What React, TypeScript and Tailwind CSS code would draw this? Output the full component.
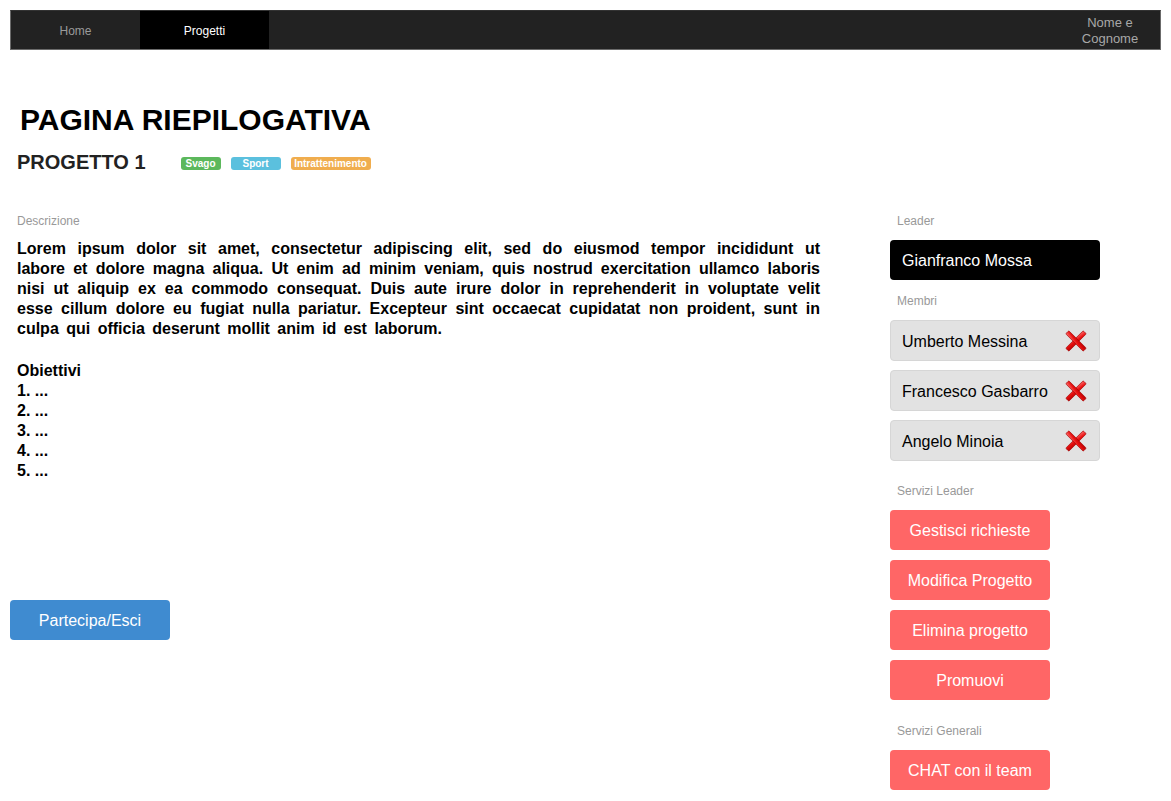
import React from "react";

function RedX() {
  return (
    <svg width="22" height="22" viewBox="0 0 24 24" className="shrink-0">
      <defs>
        <linearGradient id="xg" x1="0" y1="0" x2="1" y2="1">
          <stop offset="0%" stopColor="#ff6a6a" />
          <stop offset="50%" stopColor="#e81010" />
          <stop offset="100%" stopColor="#b80000" />
        </linearGradient>
      </defs>
      <g stroke="#a00000" strokeWidth="0.7" fill="url(#xg)">
        <rect x="9.6" y="-1.5" width="4.8" height="27" rx="1.2" transform="rotate(45 12 12)" />
        <rect x="9.6" y="-1.5" width="4.8" height="27" rx="1.2" transform="rotate(-45 12 12)" />
      </g>
    </svg>
  );
}

const members = ["Umberto Messina", "Francesco Gasbarro", "Angelo Minoia"];
const leaderServices = ["Gestisci richieste", "Modifica Progetto", "Elimina progetto", "Promuovi"];

export default function App() {
  return (
    <div className="w-[1171px] h-[801px] bg-white px-[10px] pt-[10px] font-['Liberation_Sans',Arial,sans-serif] overflow-hidden">
      <nav className="h-[40px] flex bg-[#222222] border border-[#6b6b6b] border-t-[#333]">
        <div className="w-[129px] h-full pt-[2px] flex items-center justify-center text-[12px] text-[#9a9a9a]">Home</div>
        <div className="w-[129px] h-full pt-[2px] flex items-center justify-center text-[12px] text-white bg-black">Progetti</div>
        <div className="flex-1" />
        <div className="w-[100px] h-full pt-[2px] flex flex-col items-center justify-center text-[13px] leading-[16px] text-[#a8a8a8] text-center">
          <span>Nome e</span>
          <span>Cognome</span>
        </div>
      </nav>

      <h1 className="mt-[53px] pl-[10px] text-[30px] leading-[34px] font-bold text-black">PAGINA RIEPILOGATIVA</h1>

      <div className="mt-[13px] pl-[7px] flex items-start">
        <h2 className="text-[20px] leading-[24px] font-bold text-[#222]">PROGETTO 1</h2>
        <div className="ml-[35px] mt-[7px] flex gap-[10px]">
          <span className="w-[40px] h-[13px] leading-[13px] rounded-[3px] bg-[#5cb85c] text-white text-[10px] font-bold text-center">Svago</span>
          <span className="w-[50px] h-[13px] leading-[13px] rounded-[3px] bg-[#5bc0de] text-white text-[10px] font-bold text-center">Sport</span>
          <span className="w-[80px] h-[13px] leading-[13px] rounded-[3px] bg-[#f0ad4e] text-white text-[10px] font-bold text-center whitespace-nowrap">Intrattenimento</span>
        </div>
      </div>

      <div className="mt-[26px] flex">
        <div className="w-[810px] flex flex-col">
          <div className="h-[39px] pt-[3px] pl-[7px] flex items-center text-[12px] text-[#999]">Descrizione</div>
          <div className="pl-[7px] text-[16px] leading-[20px] font-bold text-black">
            <p className="text-justify [word-spacing:3px]">
              Lorem ipsum dolor sit amet, consectetur adipiscing elit, sed do eiusmod tempor incididunt ut labore et dolore magna aliqua. Ut enim ad minim veniam, quis nostrud exercitation ullamco laboris nisi ut aliquip ex ea commodo consequat. Duis aute irure dolor in reprehenderit in voluptate velit esse cillum dolore eu fugiat nulla pariatur. Excepteur sint occaecat cupidatat non proident, sunt in culpa qui officia deserunt mollit anim id est laborum.
            </p>
            <p className="mt-[22px]">Obiettivi</p>
            <p>1. ...</p>
            <p>2. ...</p>
            <p>3. ...</p>
            <p>4. ...</p>
            <p>5. ...</p>
          </div>
          <button className="mt-[119px] w-[160px] h-[40px] pt-[2px] rounded-[4px] bg-[#3f8bd0] text-white text-[16px] flex items-center justify-center">
            Partecipa/Esci
          </button>
        </div>

        <div className="ml-[70px] w-[210px] flex flex-col">
          <div className="h-[40px] pt-[2px] pl-[7px] flex items-center text-[12px] text-[#999]">Leader</div>
          <div className="h-[40px] pt-[2px] rounded-[4px] bg-black text-white text-[16px] pl-[12px] flex items-center">Gianfranco Mossa</div>
          <div className="h-[40px] pt-[2px] pl-[7px] flex items-center text-[12px] text-[#999]">Membri</div>
          <div className="flex flex-col gap-[9px]">
            {members.map((m) => (
              <div key={m} className="h-[41px] rounded-[4px] bg-[#e2e2e2] border border-[#d6d6d6] text-black text-[16px] pl-[11px] pr-[12px] flex items-center justify-between">
                <span className="pt-[2px]">{m}</span>
                <RedX />
              </div>
            ))}
          </div>
          <div className="mt-[9px] h-[40px] pt-[2px] pl-[7px] flex items-center text-[12px] text-[#999]">Servizi Leader</div>
          <div className="flex flex-col gap-[10px]">
            {leaderServices.map((s) => (
              <button key={s} className="w-[160px] h-[40px] pt-[2px] rounded-[4px] bg-[#ff6666] text-white text-[16px] flex items-center justify-center">
                {s}
              </button>
            ))}
          </div>
          <div className="mt-[10px] h-[40px] pt-[2px] pl-[7px] flex items-center text-[12px] text-[#999]">Servizi Generali</div>
          <button className="w-[160px] h-[40px] pt-[2px] rounded-[4px] bg-[#ff6666] text-white text-[16px] flex items-center justify-center">
            CHAT con il team
          </button>
        </div>
      </div>
    </div>
  );
}
